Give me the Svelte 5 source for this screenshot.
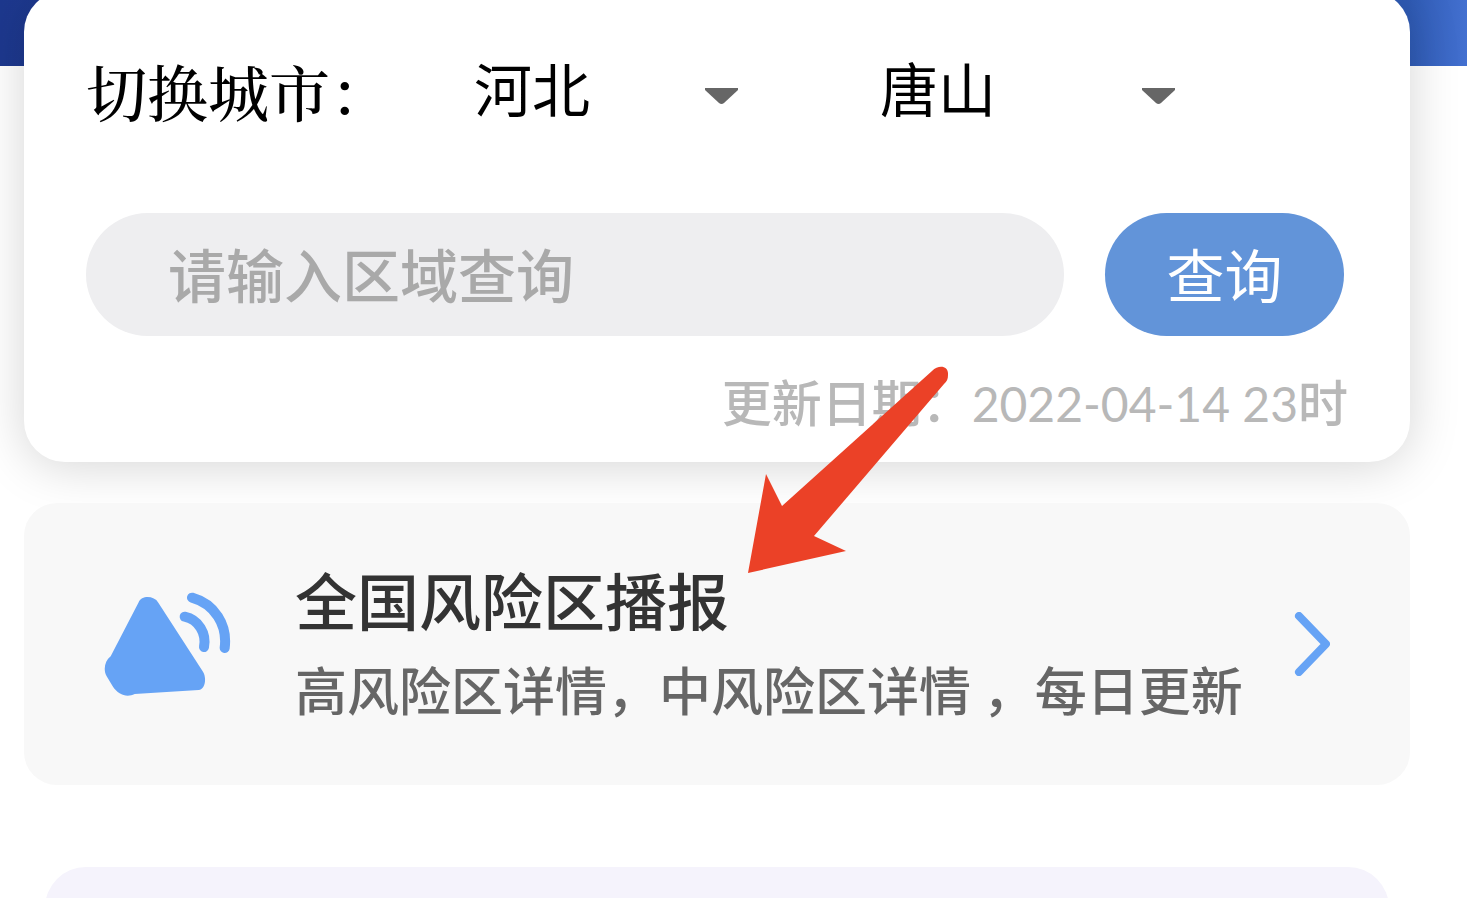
<script lang="ts">
  let province = $state('河北');
  let city = $state('唐山');
  let keyword = $state('');

  const regions: Record<string, string[]> = {
    河北: ['唐山', '石家庄', '保定'],
    山东: ['济南', '青岛', '烟台']
  };

  let cities = $derived(regions[province]);

  function changeProvince() {
    city = regions[province][0];
  }
</script>

{#snippet caret()}
  <svg class="caret" viewBox="0 0 33 16" aria-hidden="true">
    <path d="M0 0H33V2L19 15Q16.500 17 14 15L0 2Z" fill="#666" />
  </svg>
{/snippet}

<div class="page">
  <div class="banner"></div>

  <main>
    <form class="card" onsubmit={(e) => e.preventDefault()}>
      <div class="city-row">
        <label class="city-label" for="province">切换城市：</label>
        <div class="select-wrap">
          <select id="province" bind:value={province} onchange={changeProvince}>
            {#each Object.keys(regions) as name}
              <option>{name}</option>
            {/each}
          </select>
          {@render caret()}
        </div>
        <div class="select-wrap">
          <select aria-label="城市" bind:value={city}>
            {#each cities as name}
              <option>{name}</option>
            {/each}
          </select>
          {@render caret()}
        </div>
      </div>

      <div class="query-row">
        <input type="text" aria-label="区域" placeholder="请输入区域查询" bind:value={keyword} />
        <button type="submit">查询</button>
      </div>

      <p class="updated">更新日期：<span class="date">2022-04-14 23</span>时</p>
    </form>

    <div class="broadcast-wrap">
      <a class="broadcast" href="#risk">
        <svg class="horn" viewBox="72 66 381 315" aria-hidden="true">
          <g fill="#66a3f5">
            <path d="M176 97C184 76 222 76 235 98L369 305C381 325 375 360 356 360L164 372C142 383 115 376 98 349L80 319C69 299 74 273 92 259Z" />
          </g>
          <g fill="none" stroke="#66a3f5" stroke-width="30" stroke-linecap="round">
            <path d="M336 83C404 102 443 164 434 234" />
            <path d="M314 140C356 149 380 190 372 231" />
          </g>
        </svg>
        <div class="text">
          <h2>全国风险区播报</h2>
          <p>高风险区详情，中风险区详情 ，每日更新</p>
        </div>
        <svg class="chevron" viewBox="0 0 36 64" aria-hidden="true">
          <path d="M5 4L32 32L5 60" fill="none" stroke="#66a3f5" stroke-width="8" stroke-linecap="round" stroke-linejoin="round" />
        </svg>
      </a>
      <svg class="pointer" viewBox="0 0 201 208" aria-hidden="true">
        <path d="M0 207L18 108L34 140L184 5C191 -2 201 0 200 9C200 13 199 15 196 18L66 170L98 185Z" fill="#eb4127" />
      </svg>
    </div>

    <section class="panel"></section>
  </main>
</div>

<style>
  :global(body) {
    background: #fff;
  }

  .page {
    height: 100vh;
    margin-right: 7px;
    overflow: hidden;
    font-family: "Noto Sans CJK SC", sans-serif;
  }

  .banner {
    height: 66px;
    background: linear-gradient(90deg, #1d388e, #2f5bb5 96%, #4370d0);
  }

  main {
    padding: 0 57px 0 24px;
  }

  .card {
    position: relative;
    margin-top: -75px;
    padding: 60px 66px 18px 62px;
    border-radius: 41px;
    background: #fff;
    box-shadow: 0 4px 50px rgba(0, 0, 0, 0.17);
  }

  .city-row {
    display: grid;
    grid-template-columns: 388fr 406fr 454fr 10fr;
    height: 82px;
  }

  .city-label {
    font-family: "Noto Serif CJK SC", "Noto Sans CJK SC", serif;
    font-size: 61px;
    font-weight: 500;
    line-height: 80px;
    white-space: nowrap;
  }

  .select-wrap {
    position: relative;
    width: 65%;
  }

  select {
    display: block;
    width: 100%;
    height: 72px;
    padding: 0;
    border: 0;
    appearance: none;
    background: transparent;
    color: #000;
    font-family: inherit;
    font-size: 58px;
    line-height: 72px;
  }

  .caret {
    position: absolute;
    right: 0;
    top: 37px;
    width: 33px;
    height: 16px;
    pointer-events: none;
  }

  .query-row {
    display: flex;
    gap: 41px;
    margin-top: 80px;
  }

  input {
    flex: 1;
    min-width: 0;
    height: 123px;
    box-sizing: border-box;
    padding: 0 82px 4px;
    border: 0;
    border-radius: 62px;
    background: #eeeef0;
    font-family: inherit;
    font-size: 58px;
    font-weight: 500;
  }

  input::placeholder {
    color: #a9a9a9;
    opacity: 1;
  }

  button {
    width: 239px;
    height: 123px;
    padding: 0 0 4px;
    border: 0;
    border-radius: 62px;
    background: #6294d9;
    color: #fff;
    font-family: inherit;
    font-size: 58px;
  }

  .updated {
    margin: 24px -4px 0 0;
    color: #b8b8b8;
    font-size: 50px;
    font-weight: 500;
    line-height: 80px;
    text-align: right;
    white-space: nowrap;
  }

  .date {
    font-family: Lato, sans-serif;
    font-size: 48px;
    font-weight: 400;
  }

  .broadcast-wrap {
    position: relative;
    margin-top: 41px;
  }

  .broadcast {
    display: flex;
    align-items: center;
    height: 282px;
    padding: 0 80px;
    border-radius: 33px;
    background: #f8f8f8;
    color: #333;
    text-decoration: none;
  }

  .horn {
    flex: none;
    width: 127px;
    height: 105px;
  }

  .text {
    flex: 1;
    margin-left: 64px;
    padding-bottom: 10px;
    white-space: nowrap;
  }

  h2 {
    margin: 0 0 20px;
    font-size: 62px;
    font-weight: 500;
    line-height: 80px;
  }

  .text p {
    margin: 0;
    color: #666;
    font-size: 52px;
    font-weight: 500;
    line-height: 60px;
  }

  .chevron {
    flex: none;
    width: 36px;
    height: 64px;
  }

  .pointer {
    position: absolute;
    left: 724px;
    top: -137px;
    width: 201px;
    height: 208px;
    pointer-events: none;
  }

  .panel {
    height: 160px;
    margin: 82px 21px 0;
    border-radius: 41px;
    background: #f5f3fc;
  }
</style>
